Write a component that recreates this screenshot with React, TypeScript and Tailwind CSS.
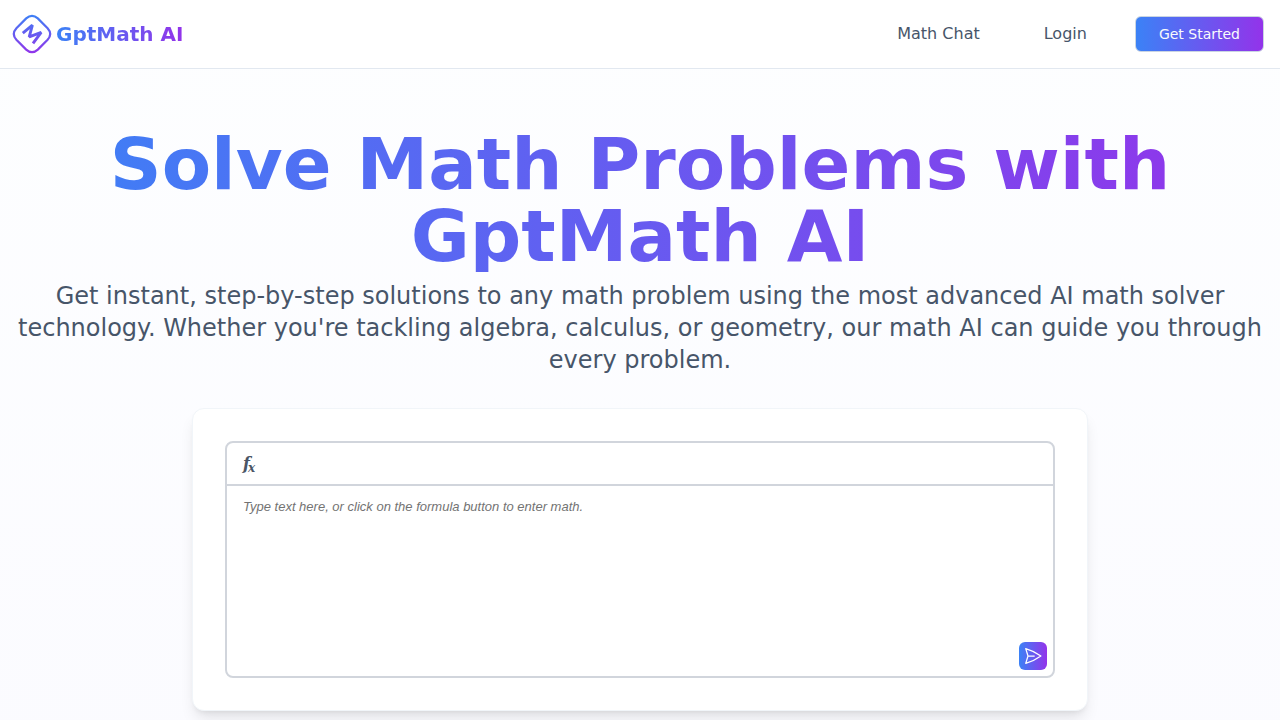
import { HiOutlinePaperAirplane } from 'react-icons/hi2'

function Logo() {
  return (
    <svg viewBox="0 0 40 40" className="size-10" fill="none" aria-hidden="true">
      <defs>
        <linearGradient id="logo-gradient" gradientUnits="userSpaceOnUse" x1="20" y1="0" x2="20" y2="40">
          <stop offset="0%" stopColor="#3b82f6" />
          <stop offset="100%" stopColor="#9333ea" />
        </linearGradient>
      </defs>
      <path
        d="M14.2 4.4Q20 -0.8 25.8 4.4L35.6 14.2Q40.8 20 35.6 25.8L25.8 35.6Q20 40.8 14.2 35.6L4.4 25.8Q-0.8 20 4.4 14.2Z"
        stroke="url(#logo-gradient)"
        strokeWidth="2.2"
      />
      <path
        d="M10.8 19.2 20.4 11.2 17.2 22.8 29.2 18.4 21 29.4"
        stroke="url(#logo-gradient)"
        strokeWidth="2.9"
        strokeLinejoin="bevel"
      />
    </svg>
  )
}

function Header() {
  return (
    <header className="flex items-center justify-between border-b border-slate-200 bg-white px-4 py-4">
      <a href="/" className="-my-2 -ml-1 flex items-center gap-1">
        <Logo />
        <span className="bg-linear-to-r/srgb from-[#3b82f6] to-[#9333ea] bg-clip-text text-xl font-bold text-transparent">
          GptMath AI
        </span>
      </a>
      <nav className="flex items-center gap-12 text-[#475569]">
        <a href="/chat" className="px-2">
          Math Chat
        </a>
        <a href="/login" className="pl-2">
          Login
        </a>
        <button
          type="button"
          className="h-9 rounded-md border border-slate-300 bg-linear-to-r/srgb from-[#3b82f6] to-[#9333ea] px-[23px] text-sm text-slate-50"
        >
          Get Started
        </button>
      </nav>
    </header>
  )
}

function MathEditor() {
  return (
    <form className="relative rounded-lg border-2 border-gray-300 bg-white">
      <div className="flex h-[43px] items-center border-b-2 border-gray-300 px-4">
        <button
          type="button"
          aria-label="Insert formula"
          className="flex items-end font-['DejaVu_Serif',serif] text-base leading-5 font-bold text-gray-600 italic"
        >
          f<span className="-ml-0.5 text-xs leading-3">x</span>
        </button>
      </div>
      <textarea
        aria-label="Math problem"
        placeholder="Type text here, or click on the formula button to enter math."
        className="block h-[190px] w-full resize-none px-4 py-[13px] font-['Liberation_Sans',sans-serif] text-[13px] leading-4 outline-none placeholder:text-neutral-500 placeholder:italic"
      />
      <button
        type="submit"
        aria-label="Send"
        className="absolute right-1.5 bottom-1.5 rounded-md bg-linear-to-r/srgb from-[#3b82f6] to-[#9333ea] p-1 text-white"
      >
        <HiOutlinePaperAirplane className="size-5" />
      </button>
    </form>
  )
}

export default function App() {
  return (
    <div className="flex min-h-screen flex-col bg-linear-to-b/srgb from-[#fdfeff] to-[#fbfbff] font-['DejaVu_Sans',sans-serif]">
      <Header />
      <main className="px-4 pt-[59px] pb-16 text-center">
        <h1 className="bg-linear-to-r/srgb from-[#3b82f6] to-[#9333ea] bg-clip-text text-7xl leading-none font-bold text-transparent">
          Solve Math Problems with GptMath AI
        </h1>
        <p className="mt-2 text-2xl text-[#475569]">
          Get instant, step-by-step solutions to any math problem using the most advanced AI math
          solver technology. Whether you're tackling algebra, calculus, or geometry, our math AI can
          guide you through every problem.
        </p>
        <div className="mx-auto mt-8 max-w-4xl rounded-xl border border-slate-100 bg-white p-8 text-left shadow-lg">
          <MathEditor />
        </div>
      </main>
    </div>
  )
}
